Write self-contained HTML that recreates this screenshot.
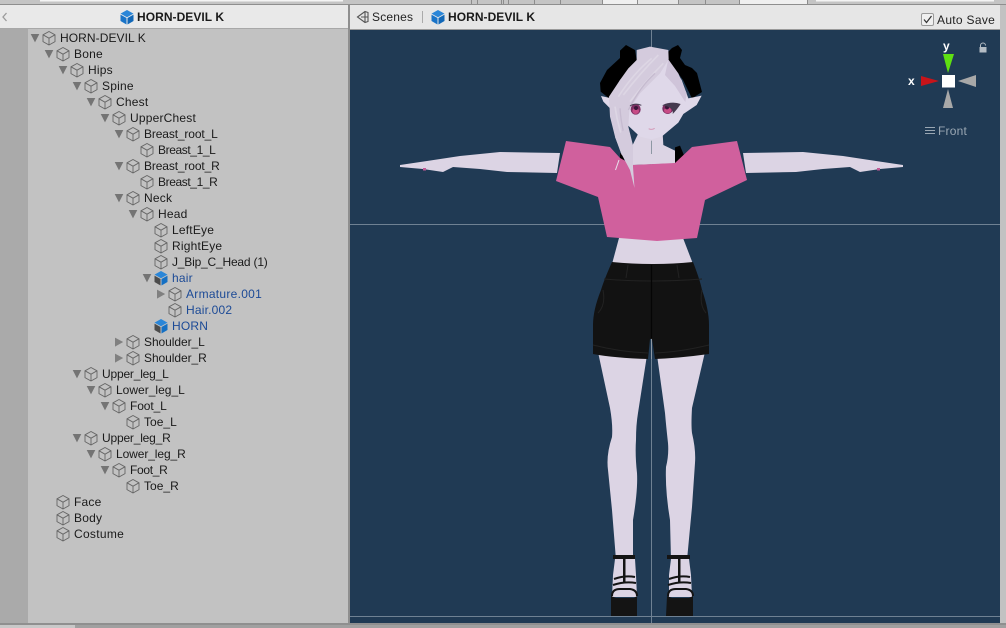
<!DOCTYPE html>
<html><head><meta charset="utf-8"><style>
html,body{margin:0;padding:0;background:#a0a0a0;width:1006px;height:628px;overflow:hidden}
svg{display:block}
text{font-family:"Liberation Sans",sans-serif;font-size:12px;letter-spacing:.2px;fill:#1a1a1a}
.b{fill:#1c4a96}
.h{font-weight:bold;letter-spacing:.05px;fill:#1a1a1a}
</style></head><body>
<svg width="1006" height="628" viewBox="0 0 1006 628" xmlns="http://www.w3.org/2000/svg">
<defs>
<polygon id="d" points="-4.3,-4 4.3,-4 0,4.4" fill="#747474"/>
<polygon id="r" points="-4,-4.4 4.2,0 -4,4.6" fill="#808080"/>
<g id="c" fill="none" stroke="#666" stroke-width=".9"><path d="M0-6.5 6-3.2V3.6L0 7-6 3.6V-3.2ZM-6-3.2 0 .2 6-3.2M0 .2V7"/></g>
<g id="p"><polygon points="0,-7 6.5,-3.4 0,.2 -6.5,-3.4" fill="#2a86d8"/><polygon points="-6.5,-2.4 -.5,1 -.5,7.5 -6.5,4" fill="#4c4c4c"/><polygon points=".5,1 6.5,-2.4 6.5,4 .5,7.5" fill="#1570c4"/></g>
<g id="q"><polygon points="0,-7 6.5,-3.4 0,.2 -6.5,-3.4" fill="#2a86d8"/><polygon points="-6.5,-2.4 -.5,1 -.5,7.5 -6.5,4" fill="#1a74c8"/><polygon points=".5,1 6.5,-2.4 6.5,4 .5,7.5" fill="#1268b8"/></g>
</defs>

<!-- top strip -->
<rect width="1006" height="5" fill="#c4c4c4"/>
<rect x="40" width="303" height="1.5" fill="#f4f4f4"/>
<rect x="602" width="35" height="4" fill="#efefef"/><rect x="637" width="41" height="4" fill="#e4e4e4"/><rect x="739" width="68" height="4" fill="#efefef"/>
<rect x="816" width="178" height="1.5" fill="#f4f4f4"/>
<g fill="#8c8c8c"><rect x="471" width="1" height="4"/><rect x="477" width="1" height="4"/><rect x="501" width="1" height="4"/><rect x="503" width="1" height="4"/><rect x="508" width="1" height="4"/><rect x="534" width="1" height="4"/><rect x="560" width="1" height="4"/><rect x="602" width="1" height="4"/><rect x="637" width="1" height="4"/><rect x="678" width="1" height="4"/><rect x="705" width="1" height="4"/><rect x="739" width="1" height="4"/><rect x="807" width="1" height="4"/></g>
<rect y="4" width="1006" height="1" fill="#8e8e8e"/>

<!-- left panel -->
<rect y="5" width="348" height="23" fill="#e9e9e9"/>
<rect y="28" width="348" height="1" fill="#a8a8a8"/>
<rect y="29" width="28" height="594" fill="#aaaaaa"/>
<rect x="28" y="29" width="320" height="594" fill="#c2c2c2"/>
<rect x="348" y="5" width="2" height="618" fill="#8f8f8f"/>
<path d="M6.5 13 3 17l3.5 4" fill="none" stroke="#9a9a9a" stroke-width="1.3"/>
<use href="#q" x="127" y="17"/>
<text class="h" x="137" y="21">HORN-DEVIL K</text>

<!-- tree -->
<use href="#d" x="35" y="38"/><use href="#c" x="49" y="38"/><text x="60" y="42" textLength="86">HORN-DEVIL K</text>
<use href="#d" x="49" y="54"/><use href="#c" x="63" y="54"/><text x="74" y="58">Bone</text>
<use href="#d" x="63" y="70"/><use href="#c" x="77" y="70"/><text x="88" y="74">Hips</text>
<use href="#d" x="77" y="86"/><use href="#c" x="91" y="86"/><text x="102" y="90">Spine</text>
<use href="#d" x="91" y="102"/><use href="#c" x="105" y="102"/><text x="116" y="106">Chest</text>
<use href="#d" x="105" y="118"/><use href="#c" x="119" y="118"/><text x="130" y="122">UpperChest</text>
<use href="#d" x="119" y="134"/><use href="#c" x="133" y="134"/><text x="144" y="138" textLength="74">Breast_root_L</text>
<use href="#c" x="147" y="150"/><text x="158" y="154" textLength="58">Breast_1_L</text>
<use href="#d" x="119" y="166"/><use href="#c" x="133" y="166"/><text x="144" y="170" textLength="76">Breast_root_R</text>
<use href="#c" x="147" y="182"/><text x="158" y="186" textLength="60">Breast_1_R</text>
<use href="#d" x="119" y="198"/><use href="#c" x="133" y="198"/><text x="144" y="202">Neck</text>
<use href="#d" x="133" y="214"/><use href="#c" x="147" y="214"/><text x="158" y="218">Head</text>
<use href="#c" x="161" y="230"/><text x="172" y="234">LeftEye</text>
<use href="#c" x="161" y="246"/><text x="172" y="250">RightEye</text>
<use href="#c" x="161" y="262"/><text x="172" y="266" textLength="96">J_Bip_C_Head (1)</text>
<use href="#d" x="147" y="278"/><use href="#p" x="161" y="278"/><text class="b" x="172" y="282">hair</text>
<use href="#r" x="161" y="294"/><use href="#c" x="175" y="294"/><text class="b" x="186" y="298" textLength="76">Armature.001</text>
<use href="#c" x="175" y="310"/><text class="b" x="186" y="314">Hair.002</text>
<use href="#p" x="161" y="326"/><text class="b" x="172" y="330">HORN</text>
<use href="#r" x="119" y="342"/><use href="#c" x="133" y="342"/><text x="144" y="346" textLength="61">Shoulder_L</text>
<use href="#r" x="119" y="358"/><use href="#c" x="133" y="358"/><text x="144" y="362" textLength="63">Shoulder_R</text>
<use href="#d" x="77" y="374"/><use href="#c" x="91" y="374"/><text x="102" y="378" textLength="67">Upper_leg_L</text>
<use href="#d" x="91" y="390"/><use href="#c" x="105" y="390"/><text x="116" y="394" textLength="69">Lower_leg_L</text>
<use href="#d" x="105" y="406"/><use href="#c" x="119" y="406"/><text x="130" y="410" textLength="37">Foot_L</text>
<use href="#c" x="133" y="422"/><text x="144" y="426" textLength="33">Toe_L</text>
<use href="#d" x="77" y="438"/><use href="#c" x="91" y="438"/><text x="102" y="442" textLength="69">Upper_leg_R</text>
<use href="#d" x="91" y="454"/><use href="#c" x="105" y="454"/><text x="116" y="458" textLength="70">Lower_leg_R</text>
<use href="#d" x="105" y="470"/><use href="#c" x="119" y="470"/><text x="130" y="474" textLength="38">Foot_R</text>
<use href="#c" x="133" y="486"/><text x="144" y="490" textLength="35">Toe_R</text>
<use href="#c" x="63" y="502"/><text x="74" y="506">Face</text>
<use href="#c" x="63" y="518"/><text x="74" y="522">Body</text>
<use href="#c" x="63" y="534"/><text x="74" y="538" textLength="50">Costume</text>

<!-- right panel header -->
<rect x="350" y="5" width="656" height="24" fill="#e6e6e6"/>
<rect x="350" y="29" width="650" height="1" fill="#9a9a9a"/>
<rect x="1000" y="5" width="6" height="620" fill="#c2c2c2"/>
<path d="M357.500 17 365 11.500l3 1v9l-3 1ZM361 17h7M365 12v10" fill="none" stroke="#555" stroke-width="1.100"/>
<text x="372" y="21" style="fill:#222">Scenes</text>
<rect x="422" y="11" width="1" height="12" fill="#aaa"/>
<use href="#q" x="438" y="17"/>
<text class="h" x="448" y="21">HORN-DEVIL K</text>
<rect x="921.500" y="13.500" width="12" height="12" rx="1.500" fill="#f0f0f0" stroke="#9a9a9a"/>
<path d="M924 19.500l2.500 3 5-6.500" fill="none" stroke="#333" stroke-width="1.200"/>
<text x="937" y="24" style="fill:#222" textLength="58">Auto Save</text>

<!-- scene -->
<rect x="350" y="30" width="650" height="593" fill="#203a54"/>
<rect x="350" y="224" width="650" height="1" fill="#6f8193"/>
<rect x="350" y="616" width="650" height="1" fill="#6f8193"/>
<rect x="651" y="30" width="1" height="593" fill="#6f8193"/>

<!-- character -->
<g style="filter:blur(.35px)">
<!-- arms -->
<polygon points="400,165 427,161 460,156 500,152 560,153 557,173 507,172 480,169 453,167 443,172 423,169 400,167" fill="#dcd4e4"/>
<polygon points="903,165 876,161 843,156 803,152 743,153 746,173 796,172 823,169 850,167 860,172 880,169 903,167" fill="#dcd4e4"/>
<rect x="423" y="168" width="3" height="2.500" fill="#c25a96"/><rect x="877" y="168" width="3" height="2.500" fill="#c25a96"/>
<!-- midriff -->
<polygon points="619,238 683,238 693,264 612,264" fill="#dcd4e4"/>
<!-- legs -->
<path d="M598 352 610 408Q613 425 612 437 606 455 608 470L612 510 616 560H633V520Q638 490 637 473 635 455 636 440 636 425 638 413L647 355Z" fill="#dcd4e4"/>
<path d="M705 352 692 408Q691 425 692 433 696 450 695 463L692 507 687 560H671L670 520Q665 490 666 467 669 455 668 443 666 425 665 413L657 355Z" fill="#dcd4e4"/>
<!-- shorts -->
<path d="M612 262Q652 266 693 262 700 280 702 290 709 310 709 325V354Q680 358 655 359L652 339H650L648 359Q615 358 593 354V325Q593 310 601 290 604 280 612 262Z" fill="#121212"/>
<path d="M604 279Q650 283 702 279M593 345Q620 352 648 353M709 345Q680 352 655 353M603 290Q606 305 598 313M702 290Q699 305 706 313M628 265 626 278M677 265 679 278" fill="none" stroke="#222" stroke-width="1"/>
<path d="M651.500 265V338" fill="none" stroke="#050505" stroke-width="1.200"/>
<rect x="651" y="339" width="1" height="20" fill="#8e98a4"/>
<!-- feet -->
<polygon points="615,559 635,559 636,575 637,597 612,597 613,575" fill="#dcd4e4"/>
<polygon points="671,559 689,559 691,575 692,597 669,597 669,575" fill="#dcd4e4"/>
<rect x="613" y="555" width="22" height="4" fill="#141414"/>
<rect x="667" y="555" width="23" height="4" fill="#141414"/>
<rect x="623" y="559" width="2.500" height="24" fill="#141414"/>
<rect x="678" y="559" width="2.500" height="24" fill="#141414"/>
<path d="M614 579Q625 575 635 577M613 585Q625 581 636 583M612 596Q612 589 620 589H630Q637 590 637 596M669 579Q680 575 690 577M668 585Q680 581 691 583M668 596Q668 589 676 589H686Q693 590 693 596" fill="none" stroke="#141414" stroke-width="2"/>
<polygon points="611,596 616,598 634,598 637,596 637,616 611,616" fill="#141414"/>
<polygon points="667,596 672,598 689,598 693,596 693,616 666,616" fill="#141414"/>

<!-- head in zoom coordinates -->
<g transform="translate(540 30) scale(.33333)">
<!-- horns -->
<polygon points="180,159 201,120 240,84 240,62 258,45 285,60 290,90 240,150 207,205 182,185" fill="#000"/>
<polygon points="384,66 396,54 414,45 426,60 420,84 435,105 456,114 471,129 486,186 456,205 429,150 385,90" fill="#000"/>
<!-- neck -->
<polygon points="295,310 368,310 370,345 405,362 405,400 280,405 240,375 278,345" fill="#dcd4e4"/>
<polygon points="405,352 420,347 433,378 405,400" fill="#000"/>
<polygon points="240,370 250,370 254,398 240,390" fill="#000"/>
<rect x="333" y="332" width="3" height="40" fill="#8e98a4"/>
<!-- face -->
<polygon points="183,198 215,205 240,150 320,90 385,90 425,150 445,205 485,197 470,225 430,252 415,278 365,320 335,328 300,320 270,292 235,260 215,240 190,215" fill="#dfd8e9"/>
<!-- right hair strand -->
<polygon points="385,88 415,130 440,190 436,216 405,168 375,135" fill="#cfc4d9"/>
<!-- bangs -->
<polygon points="290,60 330,50 385,60 386,88 360,130 340,150 300,190 268,240 265,290 280,350 245,375 225,320 210,260 207,200 240,150 265,115 290,90" fill="#d4cbdd"/>
<path d="M355 75Q300 130 250 195M335 85Q280 130 235 200M370 100Q320 150 270 215M225 230Q235 300 262 360" fill="none" stroke="#ddd6e4" stroke-width="5"/>
<path d="M345 130Q300 170 265 240M240 235Q245 310 272 370" fill="none" stroke="#c6bbd0" stroke-width="4"/>
<!-- eyes -->
<ellipse cx="287" cy="238" rx="15" ry="16" fill="#7d2f63"/>
<ellipse cx="287" cy="243" rx="10" ry="9" fill="#c74b85"/>
<circle cx="288" cy="234" r="6" fill="#3a1638"/>
<ellipse cx="383" cy="236" rx="16" ry="16" fill="#7d2f63"/>
<ellipse cx="383" cy="241" rx="11" ry="9" fill="#c74b85"/>
<circle cx="381" cy="232" r="6" fill="#3a1638"/>
<path d="M366 226Q395 212 422 222 410 240 398 252 402 230 366 226Z" fill="#453a4f"/>
<path d="M270 228Q285 218 304 226" fill="none" stroke="#453a4f" stroke-width="3"/>
<path d="M326 296Q335 301 344 295" fill="none" stroke="#d49ab8" stroke-width="3"/>
</g>
<!-- shirt -->
<polygon points="566,141 610,147 620,158 633,165 675,163 692,147 737,141 747,180 705,200 697,238 657,241 607,237 598,197 556,181" fill="#d0609d"/>
<!-- front strand over shirt -->
<polygon points="615,137 628,127 633,147 633,167 634.500,188 630,170 622,155" fill="#d4cbdd"/>
<path d="M619 160 615.500 170" fill="none" stroke="#e8e3ee" stroke-width="1"/>
</g>

<!-- gizmo -->
<polygon points="943,54 954,54 948,73" fill="#5fe012"/>
<polygon points="921,76 939,81 921,86" fill="#c8141a"/>
<polygon points="976,75 958,81 976,87" fill="#a8a8a8"/>
<polygon points="943,108 953,108 948,89" fill="#a8a8a8"/>
<rect x="942" y="75" width="13" height="12.500" fill="#fff"/>
<text x="943" y="50" style="fill:#fff;font-weight:bold;font-size:12px">y</text>
<text x="908" y="85" style="fill:#fff;font-weight:bold;font-size:12px">x</text>
<rect x="979.500" y="47" width="7" height="5.500" fill="#b4bcc4"/>
<path d="M980.500 47v-1.500a2.500 2.500 0 0 1 5 0" fill="none" stroke="#b4bcc4" stroke-width="1"/>
<path d="M925 127.500h10M925 130.500h10M925 133.500h10" stroke="#9aa7b3" stroke-width="1"/>
<text x="938" y="135" style="fill:#9aa7b3">Front</text>

<!-- bottom -->
<rect y="623" width="1006" height="2" fill="#8f8f8f"/>
<rect y="625" width="1006" height="3" fill="#a0a0a0"/>
<rect y="625" width="75" height="3" fill="#c8c8c8"/>
</svg>
</body></html>
